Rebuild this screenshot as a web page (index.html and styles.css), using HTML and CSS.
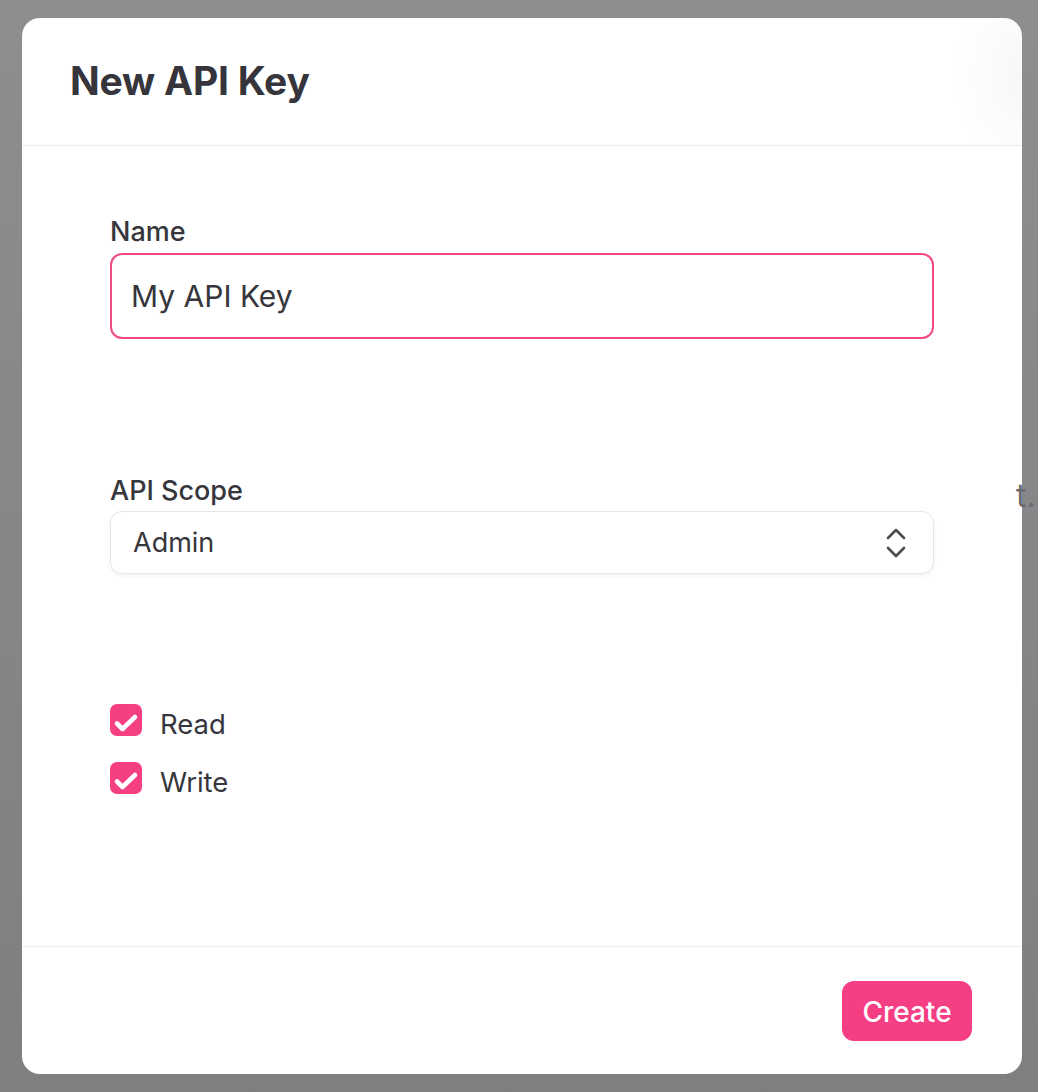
FILE: index.html
```html
<!DOCTYPE html>
<html lang="en">
<head>
<meta charset="UTF-8" />
<meta name="viewport" content="width=device-width, initial-scale=1" />
<title>New API Key</title>
<link rel="stylesheet" href="styles.css">
</head>
<body>

<div class="backdrop">
  <div class="modal">
    <header class="modal-header">
      <h1>New API Key</h1>
    </header>

    <form class="modal-body">
      <label class="field">
        <span class="field-label">Name</span>
        <input type="text" class="text-input" value="My API Key" />
      </label>

      <label class="field field-scope">
        <span class="field-label">API Scope</span>
        <span class="select-wrap">
          <select class="select">
            <option>Admin</option>
            <option>User</option>
          </select>
          <svg class="select-icon" width="22" height="32" viewBox="0 0 22 32" fill="none" stroke="#4b4b50" stroke-width="2.6" stroke-linecap="round" stroke-linejoin="round">
            <polyline points="3,11 11,3 19,11" />
            <polyline points="3,21 11,29 19,21" />
          </svg>
        </span>
      </label>

      <div class="checks">
        <label class="check">
          <span class="box">
            <svg width="32" height="32" viewBox="0 0 32 32" fill="none" stroke="#fff" stroke-width="4.6" stroke-linecap="round" stroke-linejoin="round"><polyline points="7,19.5 12.5,25 25,13" /></svg>
          </span>
          <span class="check-text">Read</span>
        </label>
        <label class="check">
          <span class="box">
            <svg width="32" height="32" viewBox="0 0 32 32" fill="none" stroke="#fff" stroke-width="4.6" stroke-linecap="round" stroke-linejoin="round"><polyline points="7,19.5 12.5,25 25,13" /></svg>
          </span>
          <span class="check-text">Write</span>
        </label>
      </div>
    </form>

    <footer class="modal-footer">
      <button type="button" class="btn-create">Create</button>
    </footer>
  </div>
</div>

<span class="peek">t.</span>

</body>
</html>
```

FILE: styles.css
```css
* { box-sizing: border-box; }
html, body { margin: 0; padding: 0; }
body { font-family: Inter, "Noto Sans", sans-serif; color: #36363c; background: linear-gradient(#8e8e90, #7f7f81); }

.backdrop { width: 1038px; height: 1092px; padding: 18px 16px 18px 22px; }

.modal { width: 1000px; height: 1056px; background: #fff; border-radius: 18px; display: flex; flex-direction: column; overflow: hidden; }

.modal-header {
  height: 128px; padding: 0 48px; display: flex; align-items: center;
  border-bottom: 1px solid #ececee;
  background: radial-gradient(ellipse 70px 100px at 100% 45%, rgba(0,0,0,0.03), rgba(0,0,0,0));
}
.modal-header h1 { margin: 0; font-size: 39px; font-weight: 700; letter-spacing: -0.2px; color: #35353b; padding-bottom: 2px; }

.modal-body { flex: 1; padding: 69px 88px 0; display: flex; flex-direction: column; }

.field { display: flex; flex-direction: column; }
.field-label { font-size: 27px; font-weight: 500; line-height: 33px; margin-bottom: 5px; color: #36363c; }
.field-scope { margin-top: 135px; }
.field-scope .field-label { margin-bottom: 4px; }

.text-input {
  height: 86px; border: 2px solid #f04884; border-radius: 12px; padding: 0 19px;
  font-family: inherit; font-size: 30px; color: #36363c; outline: none;
}

.select-wrap { position: relative; display: block; }
.select {
  width: 100%; height: 63px; appearance: none; -webkit-appearance: none; background: #fff;
  border: 1px solid #e6e6e8; border-radius: 12px; padding: 0 22px;
  font-family: inherit; font-size: 27px; color: #36363c;
  box-shadow: 0 2px 4px rgba(0,0,0,0.05);
}
.select-icon { position: absolute; right: 27px; top: 16px; pointer-events: none; }

.checks { margin-top: 130px; display: flex; flex-direction: column; gap: 26px; }
.check { display: flex; align-items: flex-start; gap: 18px; height: 32px; font-size: 27.5px; }
.check-text { line-height: 40px; }
.box { width: 32px; height: 32px; border-radius: 7px; background: #f43f82; display: block; flex: none; }
.box svg { display: block; }

.modal-footer { height: 128px; border-top: 1px solid #ececee; display: flex; justify-content: flex-end; align-items: center; padding: 1px 50px 0; }
.btn-create {
  width: 130px; height: 60px; border: none; border-radius: 12px; background: #f63e84; color: #fff;
  font-family: inherit; font-size: 28px; font-weight: 500; cursor: pointer; padding-top: 3px;
}

.peek { position: absolute; left: 1016px; top: 476px; font-family: Inter, sans-serif; font-size: 32px; color: #6a6a6e; }
```
